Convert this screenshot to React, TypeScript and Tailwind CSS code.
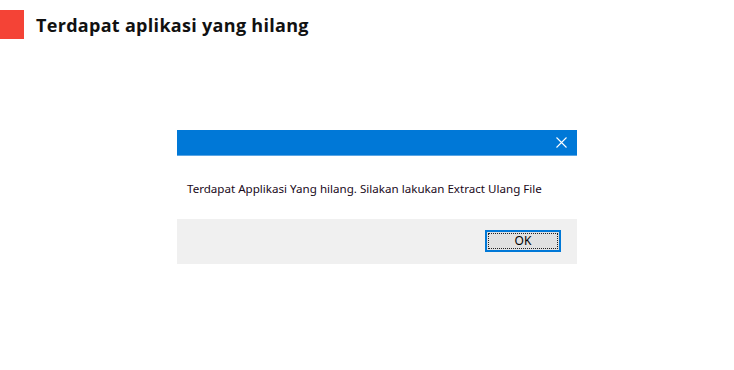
export default function App() {
  return (
    <div className="w-[734px] h-[370px] bg-white relative overflow-hidden">
      <div className="flex items-center gap-3 pt-[10px]">
        <div className="w-6 h-[29px] bg-[#f44336]" />
        <h1 className="text-[18px] font-bold text-[#111] tracking-[0.3px] pt-[1px]" style={{ fontFamily: '"Open Sans", "Liberation Sans", sans-serif' }}>
          Terdapat aplikasi yang hilang
        </h1>
      </div>

      <div className="ml-[177px] mt-[91px] w-[400px] flex flex-col">
        <div className="h-[26px] bg-[#0078d7] flex items-center justify-end pr-[9px] border-b border-[#5aa5e4]">
          <svg width="11" height="11" viewBox="0 0 11 11" className="mr-[1px]">
            <path d="M0.5 0.5 L10.5 10.5 M10.5 0.5 L0.5 10.5" stroke="#ffffff" strokeWidth="1.1" />
          </svg>
        </div>
        <div className="h-[63px] bg-white flex items-center pl-[10px] pt-[3px]">
          <p className="text-[11.6px] text-[#1a0a1a]" style={{ fontFamily: '"Noto Sans", "Open Sans", sans-serif' }}>
            Terdapat Applikasi Yang hilang. Silakan lakukan Extract Ulang File
          </p>
        </div>
        <div className="h-[45px] bg-[#f0f0f0] flex items-start justify-end pr-[16px] pt-[11px]">
          <button className="w-[76px] h-[22px] border-2 border-[#0078d7] bg-[#e1e1e1] p-[1px]">
            <div
              className="w-full h-full border border-dotted border-[#222] flex items-center justify-center text-[12px] text-black"
              style={{ fontFamily: '"Noto Sans", "Open Sans", sans-serif' }}
            >
              OK
            </div>
          </button>
        </div>
      </div>
    </div>
  );
}
